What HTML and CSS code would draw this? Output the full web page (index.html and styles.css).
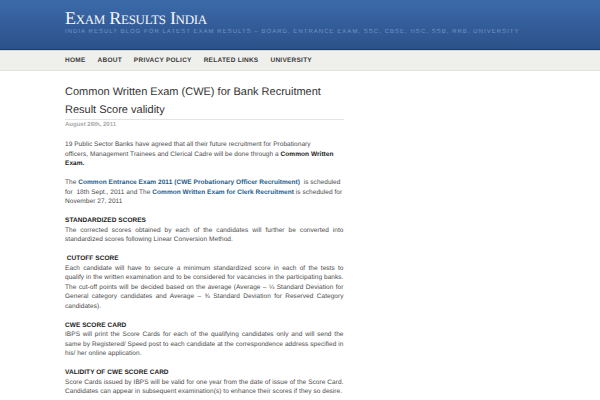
FILE: index.html
```html
<!DOCTYPE html>
<html>
<head>
<meta charset="utf-8">
<link rel="stylesheet" href="styles.css">
</head>
<body>
<div class="header">
  <div class="wrap">
    <div class="site-title">Exam Results India</div>
    <div class="tagline">India Result Blog for Latest Exam Results &ndash; Board, Entrance Exam, SSC, CBSE, HSC, SSB, RRB, University</div>
  </div>
</div>
<div class="nav">
  <div class="wrap nav-items">
    <span>Home</span><span>About</span><span>Privacy Policy</span><span>Related Links</span><span>University</span>
  </div>
</div>
<div class="wrap content">
  <h1 class="post-title">Common Written Exam (CWE) for Bank Recruitment Result Score validity</h1>
  <div class="date">August 26th, 2011</div>
  <p class="ragged">19 Public Sector Banks have agreed that all their future recruitment for Probationary<br>officers, Management Trainees and Clerical Cadre will be done through a <b>Common Written Exam.</b></p>
  <p class="ragged">The <a>Common Entrance Exam 2011 (CWE Probationary Officer Recruitment)</a>&nbsp; is scheduled for&nbsp; 18th Sept., 2011 and The <a>Common Written Exam for Clerk Recruitment</a> is scheduled for November 27, 2011</p>
  <p><b class="h">STANDARDIZED SCORES</b><br>The corrected scores obtained by each of the candidates will further be converted into standardized scores following Linear Conversion Method.</p>
  <p><b class="h">&nbsp;CUTOFF SCORE</b><br>Each candidate will have to secure a minimum standardized score in each of the tests to qualify in the written examination and to be considered for vacancies in the participating banks. The cut-off points will be decided based on the average (Average &ndash; &frac14; Standard Deviation for General category candidates and Average &ndash; &frac34; Standard Deviation for Reserved Category candidates).</p>
  <p><b class="h">CWE SCORE CARD</b><br>IBPS will print the Score Cards for each of the qualifying candidates only and will send the same by Registered/ Speed post to each candidate at the correspondence address specified in his/ her online application.</p>
  <p><b class="h">VALIDITY OF CWE SCORE CARD</b><br>Score Cards issued by IBPS will be valid for one year from the date of issue of the Score Card. Candidates can appear in subsequent examination(s) to enhance their scores if they so desire.</p>
</div>
</body>
</html>
```
FILE: styles.css
```css
* { box-sizing: border-box; }
body {
  margin: 0;
  background: #fff;
  font-family: "Liberation Sans", Arial, sans-serif;
  color: #444;
  text-rendering: geometricPrecision;
}
.wrap {
  width: 600px;
  padding-left: 65px;
  padding-right: 256.5px;
}
.header {
  height: 50px;
  background: linear-gradient(#3b6aa9, #2c5189);
  border-bottom: 1px solid #1e3c66;
  padding-top: 8px;
}
.header .wrap { padding-right: 0; }
.site-title {
  font-family: "Liberation Serif", "Times New Roman", serif;
  font-variant: small-caps;
  font-size: 18px;
  line-height: 20px;
  letter-spacing: -0.3px;
  color: #f4f6fa;
}
.tagline {
  margin-top: 0;
  font-size: 6px;
  line-height: 8px;
  letter-spacing: 1.03px;
  text-transform: uppercase;
  color: #7096ca;
  white-space: nowrap;
}
.nav {
  height: 21px;
  background: #efefeb;
  border-top: 1px solid #d7d7d3;
  border-bottom: 1px solid #e3e3df;
}
.nav-items {
  display: flex;
  gap: 12px;
  align-items: center;
  height: 19px;
  padding-right: 0;
}
.nav-items span {
  font-size: 6.5px;
  font-weight: bold;
  text-transform: uppercase;
  letter-spacing: 0.25px;
  color: #3a3a3a;
}
.content {
  padding-top: 12px;
}
.post-title {
  margin: 0;
  font-size: 11px;
  line-height: 18px;
  font-weight: normal;
  color: #333;
  border-bottom: 1px solid #e4e4e4;
}
.date {
  font-size: 6px;
  font-weight: bold;
  color: #aaa;
  line-height: 8px;
  margin-top: 1px;
  margin-bottom: 11px;
}
p {
  margin: 0 0 9.5px 0;
  font-size: 6.5px;
  line-height: 9.5px;
  letter-spacing: 0.05px;
  text-align: justify;
  color: #4a4a4a;
}
p.ragged { text-align: left; }
p b { color: #222; }
a {
  color: #1c5c8e;
  font-weight: bold;
}
```
